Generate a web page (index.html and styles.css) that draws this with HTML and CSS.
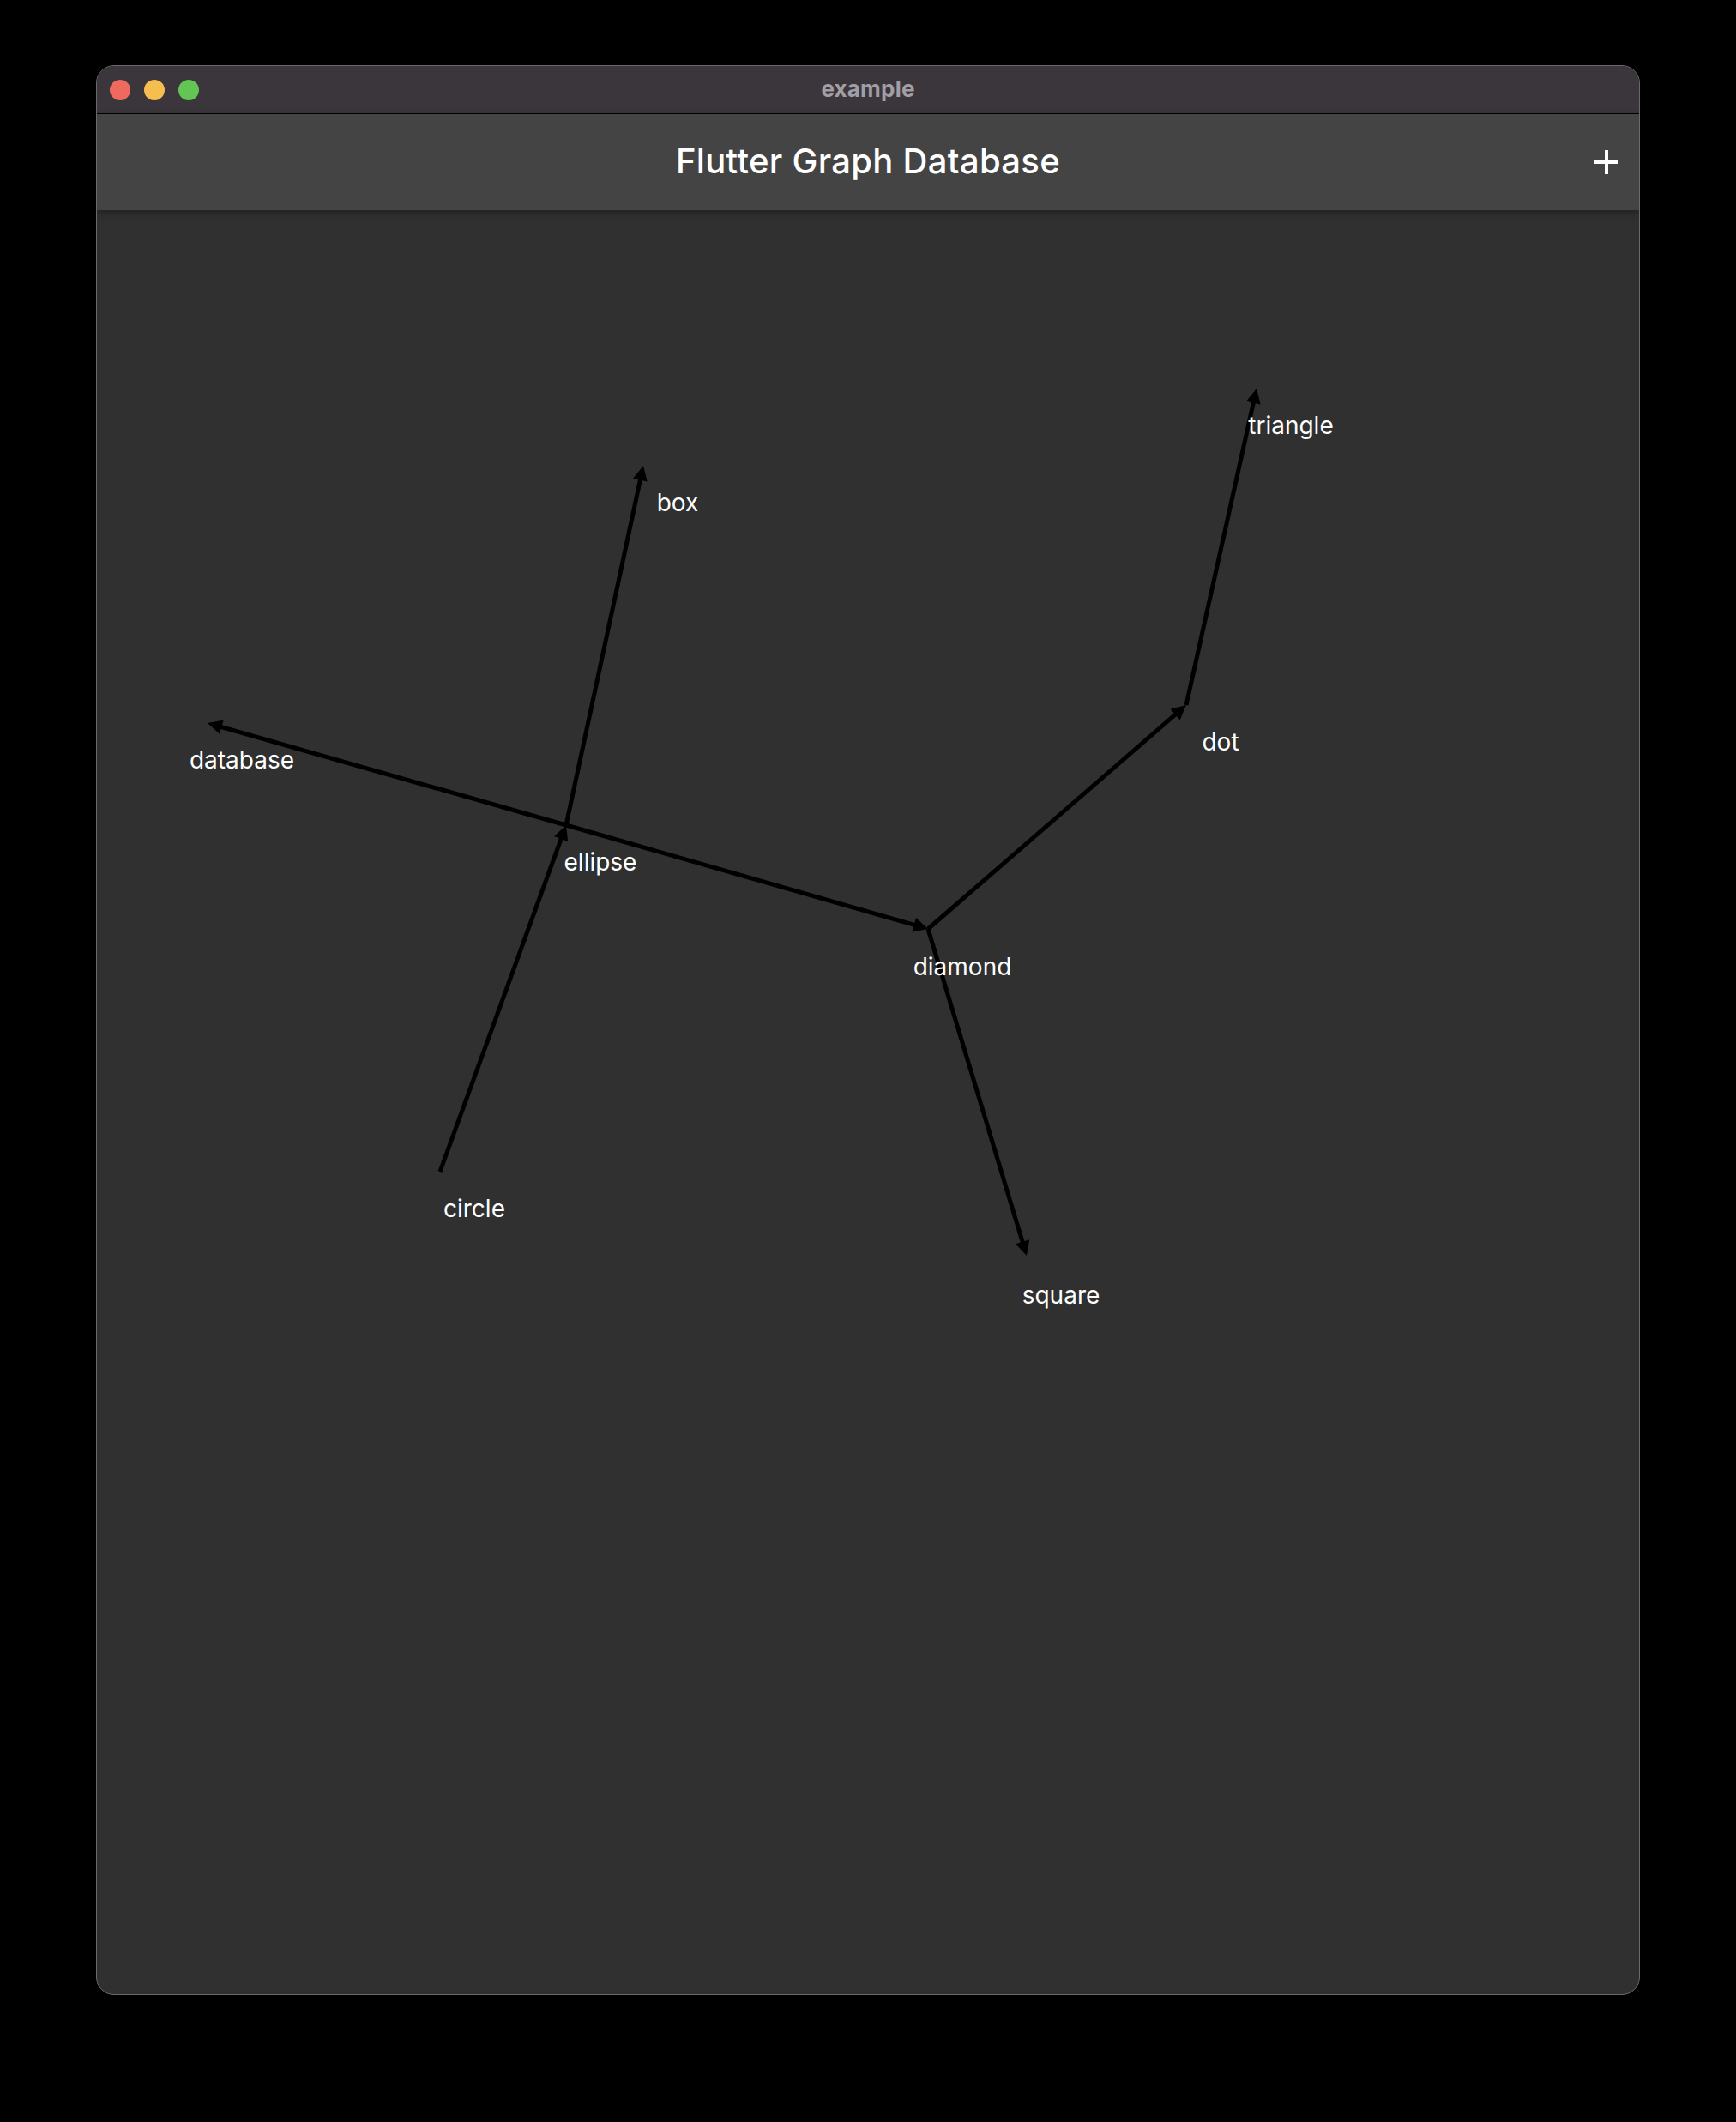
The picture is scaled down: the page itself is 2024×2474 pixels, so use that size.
FILE: index.html
```html
<!DOCTYPE html>
<html lang="en">
<head>
<meta charset="utf-8">
<title>example</title>
<link rel="stylesheet" href="styles.css">
</head>
<body>
<div class="window">
  <div class="titlebar">
    <div class="lights">
      <span class="light red"></span>
      <span class="light yellow"></span>
      <span class="light green"></span>
    </div>
    <div class="wintitle">example</div>
    <div></div>
  </div>
  <header class="appbar">
    <div></div>
    <h1 class="apptitle">Flutter Graph Database</h1>
    <button class="addbtn" aria-label="Add">
      <svg width="48" height="48" viewBox="0 0 48 48"><path d="M22 10h4v12h12v4H26v12h-4V26H10v-4h12z" fill="#fff"/></svg>
    </button>
  </header>
  <main class="canvas">
    <svg class="graph" width="1798" height="2080" viewBox="0 0 1798 2080">
      <g transform="translate(-113,-245)">
        <g class="edges" stroke="#000" stroke-width="5" fill="none">
          <line x1="513" y1="1366" x2="656.6" y2="971.4"/>
          <line x1="660" y1="962" x2="747.9" y2="552.8"/>
          <line x1="660" y1="962" x2="251.6" y2="845.7"/>
          <line x1="660" y1="962" x2="1072.4" y2="1080.2"/>
          <line x1="1082" y1="1083" x2="1375.4" y2="828.6"/>
          <line x1="1383" y1="822" x2="1462.8" y2="462.8"/>
          <line x1="1082" y1="1083" x2="1194.1" y2="1454.4"/>
        </g>
        <g class="heads" fill="#000">
          <polygon points="660,962 662.2,980.9 646.2,975.1"/>
          <polygon points="750,543 754.7,561.4 738.1,557.8"/>
          <polygon points="242,843 260.7,839.5 256.0,855.8"/>
          <polygon points="1082,1083 1063.3,1086.5 1068.0,1070.1"/>
          <polygon points="1383,822 1375.7,839.6 1364.6,826.7"/>
          <polygon points="1465,453 1469.6,471.4 1453.0,467.8"/>
          <polygon points="1197,1464 1184.0,1450.2 1200.2,1445.3"/>
        </g>
        <g class="labels">
          <text x="790" y="595.5">box</text>
          <text x="1505" y="505.5">triangle</text>
          <text x="282" y="895.5">database</text>
          <text x="700" y="1014.5">ellipse</text>
          <text x="1122" y="1136.5">diamond</text>
          <text x="1423" y="874.5">dot</text>
          <text x="553" y="1418.5">circle</text>
          <text x="1237" y="1519.5">square</text>
        </g>
      </g>
    </svg>
  </main>
</div>
</body>
</html>
```
FILE: styles.css
```css
html, body {
  margin: 0;
  background: #000;
}
body {
  padding: 76px 0 0 112px;
  height: 2474px;
  box-sizing: border-box;
  font-family: Inter, "Liberation Sans", sans-serif;
}
.window {
  width: 1800px;
  height: 2250px;
  box-sizing: border-box;
  border: 1px solid #6a6a6a;
  border-radius: 21px;
  overflow: hidden;
  display: flex;
  flex-direction: column;
  background: #303030;
}
.titlebar {
  height: 55px;
  flex: none;
  background: #3a363c;
  border-bottom: 1px solid #000;
  display: grid;
  grid-template-columns: 1fr auto 1fr;
  align-items: center;
}
.lights {
  display: flex;
  gap: 16px;
  padding-left: 15px;
}
.light {
  width: 24px;
  height: 24px;
  border-radius: 50%;
  display: block;
}
.red { background: #ee6a5f; }
.yellow { background: #f5be4f; }
.green { background: #62c554; }
.wintitle {
  color: #a29ea4;
  font-weight: 700;
  font-size: 26px;
  letter-spacing: 0.2px;
  padding-bottom: 3px;
}
.appbar {
  height: 112px;
  flex: none;
  background: #444444;
  display: grid;
  grid-template-columns: 1fr auto 1fr;
  align-items: center;
  position: relative;
  z-index: 1;
  box-shadow: 0 3px 8px rgba(0,0,0,0.35);
}
.apptitle {
  margin: 0;
  padding-bottom: 3px;
  color: #fff;
  font-weight: 500;
  font-size: 40px;
  letter-spacing: 0.3px;
}
.addbtn {
  justify-self: end;
  margin-right: 14px;
  width: 48px;
  height: 48px;
  padding: 0;
  border: 0;
  background: none;
  display: flex;
}
.canvas {
  flex: 1;
  position: relative;
  overflow: hidden;
}
.graph {
  display: block;
}
.labels text {
  fill: #fff;
  font-family: Inter, "Liberation Sans", sans-serif;
  font-size: 28px;
  text-anchor: middle;
}
```
